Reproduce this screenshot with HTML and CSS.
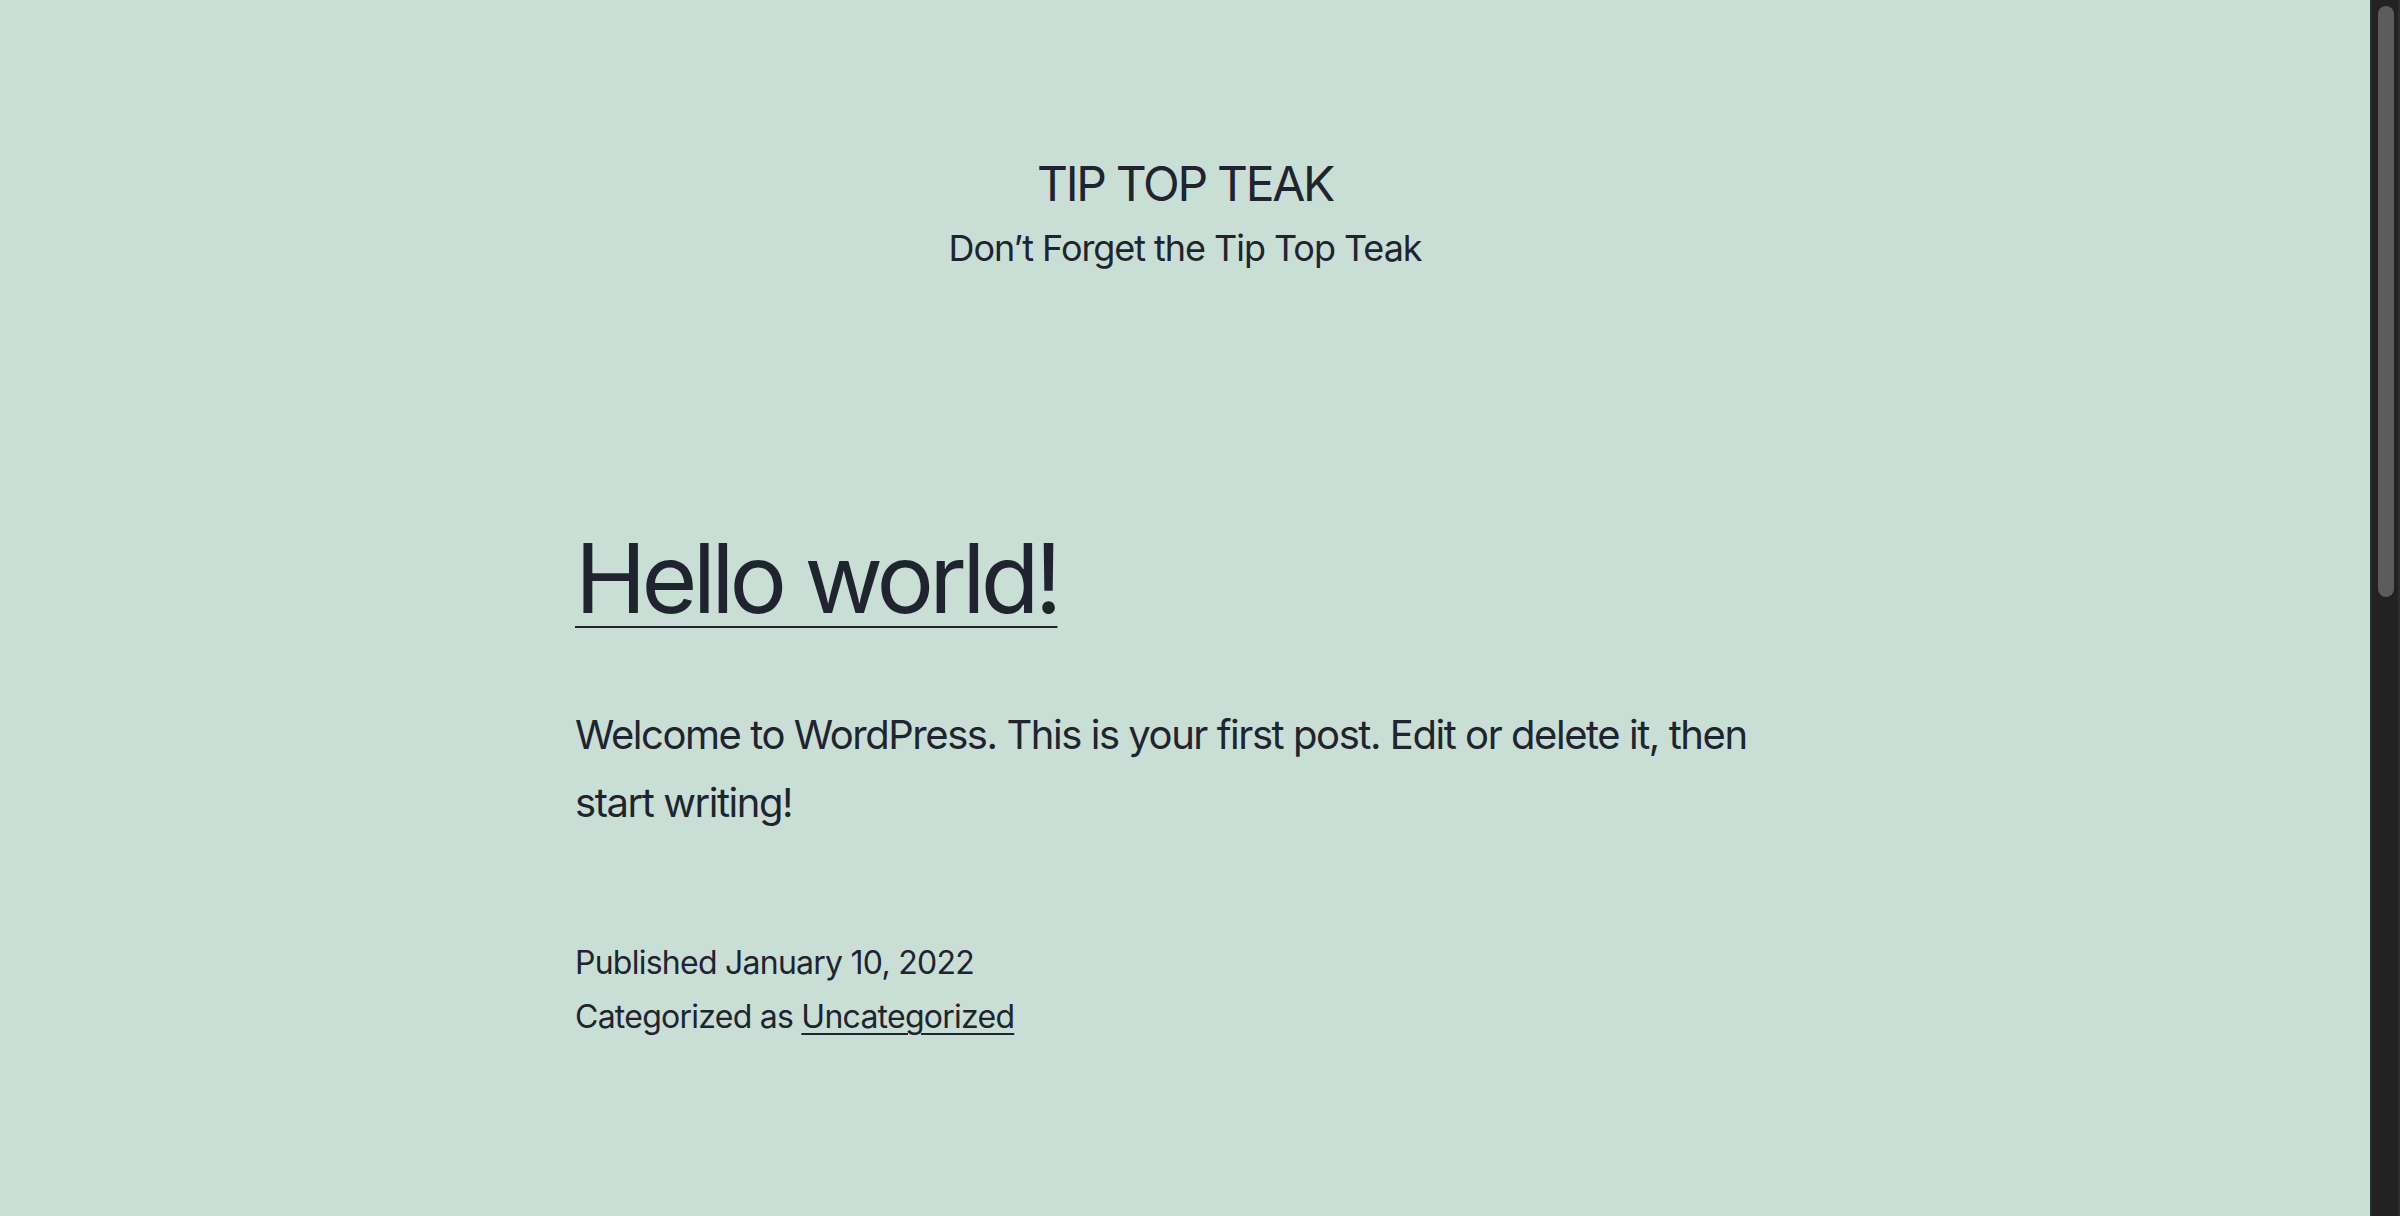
FILE: index.html
```html
<!DOCTYPE html>
<html lang="en">
<head>
<meta charset="utf-8">
<title>TIP TOP TEAK</title>
<link rel="stylesheet" href="styles.css">
</head>
<body>
<div class="window">
  <div class="page">
    <header class="site-header">
      <p class="site-title">TIP TOP TEAK</p>
      <p class="site-description">Don’t Forget the Tip Top Teak</p>
    </header>
    <main class="site-main">
      <article class="post">
        <h2 class="entry-title"><a href="#">Hello world!</a></h2>
        <div class="entry-content">
          <p>Welcome to WordPress. This is your first post. Edit or delete it, then start writing!</p>
        </div>
        <footer class="entry-footer">
          <div class="posted-on">Published January 10, 2022</div>
          <div class="cat-links">Categorized as <a href="#">Uncategorized</a></div>
        </footer>
      </article>
    </main>
  </div>
  <div class="scrollbar"><div class="thumb"></div></div>
</div>
</body>
</html>
```

FILE: styles.css
```css
html, body {
  margin: 0;
  padding: 0;
  height: 100%;
  overflow: hidden;
}
body {
  background: #c9dfd6;
  color: #1f242e;
  font-family: "Inter", "Noto Sans", sans-serif;
}
.window {
  display: flex;
  height: 100vh;
}
.page {
  flex: 1;
  min-width: 0;
}
.site-header {
  padding-top: 153px;
  text-align: center;
}
.site-title {
  margin: 0;
  font-size: 48px;
  line-height: 62px;
  font-weight: 400;
  letter-spacing: -2.3px;
  text-transform: uppercase;
}
.site-description {
  margin: 8px 0 0;
  font-size: 36px;
  line-height: 50px;
  letter-spacing: -1.05px;
}
.site-main {
  width: 1220px;
  margin: 0 auto;
  padding-top: 243px;
}
.entry-title {
  margin: 0;
  font-size: 96px;
  line-height: 125px;
  font-weight: 400;
  letter-spacing: -4.8px;
}
.entry-title a,
.cat-links a {
  color: inherit;
  text-decoration: underline;
  text-decoration-thickness: 2px;
}
.entry-title a {
  text-underline-offset: 13px;
}
.cat-links a {
  text-underline-offset: 5px;
}
.entry-content {
  margin-top: 60px;
  font-size: 40px;
  line-height: 68px;
  letter-spacing: -1.45px;
}
.entry-content p {
  margin: 0;
}
.entry-footer {
  margin-top: 99px;
  font-size: 32px;
  line-height: 54.4px;
  letter-spacing: -0.75px;
}
.scrollbar {
  width: 30px;
  flex: none;
  background: #222222;
  border-left: 2px solid #2c2c2c;
  border-right: 2px solid #2e2e2e;
  box-sizing: border-box;
  padding: 6px 4px 0 6px;
}
.thumb {
  height: 591px;
  background: #5c5c5c;
  border-radius: 8px;
}
```
